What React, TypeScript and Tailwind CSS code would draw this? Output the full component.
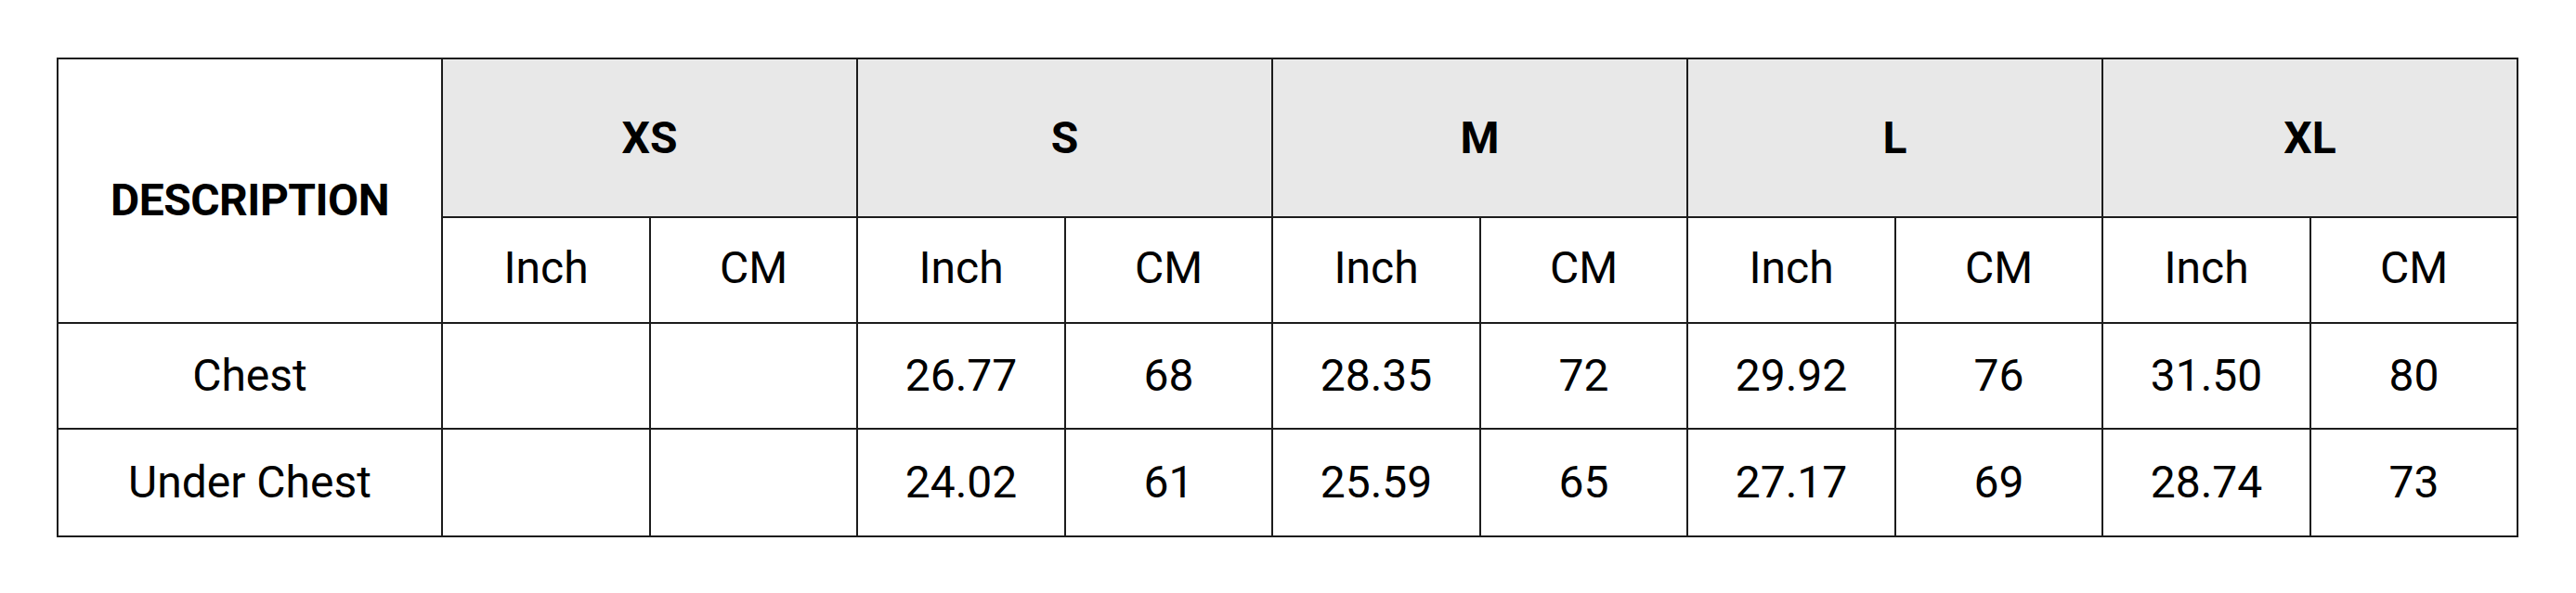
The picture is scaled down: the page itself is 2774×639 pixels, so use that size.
import { Fragment } from 'react';

const sizes = ['XS', 'S', 'M', 'L', 'XL'];

const rows = [
  { label: 'Chest', values: ['', '', '26.77', '68', '28.35', '72', '29.92', '76', '31.50', '80'] },
  { label: 'Under Chest', values: ['', '', '24.02', '61', '25.59', '65', '27.17', '69', '28.74', '73'] },
];

const cell = 'border-2 border-[#1c1c1c] text-center align-middle';

export default function App() {
  return (
    <div className="w-[2774px] h-[639px] bg-white pl-[61px] pt-[62px] font-['Roboto','Liberation_Sans',sans-serif] text-black">
      <table className="border-collapse table-fixed w-[2651px] text-[48px] leading-none">
        <colgroup>
          <col className="w-[414px]" />
          {sizes.map((s) => (
            <Fragment key={s}>
              <col className="w-[224px]" />
              <col className="w-[223px]" />
            </Fragment>
          ))}
        </colgroup>
        <thead>
          <tr className="h-[171px]">
            <th rowSpan={2} className={`${cell} font-bold pt-5 tracking-[-0.5px]`}>
              DESCRIPTION
            </th>
            {sizes.map((s) => (
              <th key={s} colSpan={2} className={`${cell} bg-[#e8e8e8] font-bold`}>
                {s}
              </th>
            ))}
          </tr>
          <tr className="h-[114px]">
            {sizes.map((s) => (
              <Fragment key={s}>
                <td className={`${cell} pb-1`}>Inch</td>
                <td className={`${cell} pb-1`}>CM</td>
              </Fragment>
            ))}
          </tr>
        </thead>
        <tbody>
          {rows.map((r, i) => (
            <tr key={r.label} className={i === 0 ? 'h-[114px]' : 'h-[116px]'}>
              <td className={cell}>{r.label}</td>
              {r.values.map((v, j) => (
                <td key={j} className={cell}>{v}</td>
              ))}
            </tr>
          ))}
        </tbody>
      </table>
    </div>
  );
}
